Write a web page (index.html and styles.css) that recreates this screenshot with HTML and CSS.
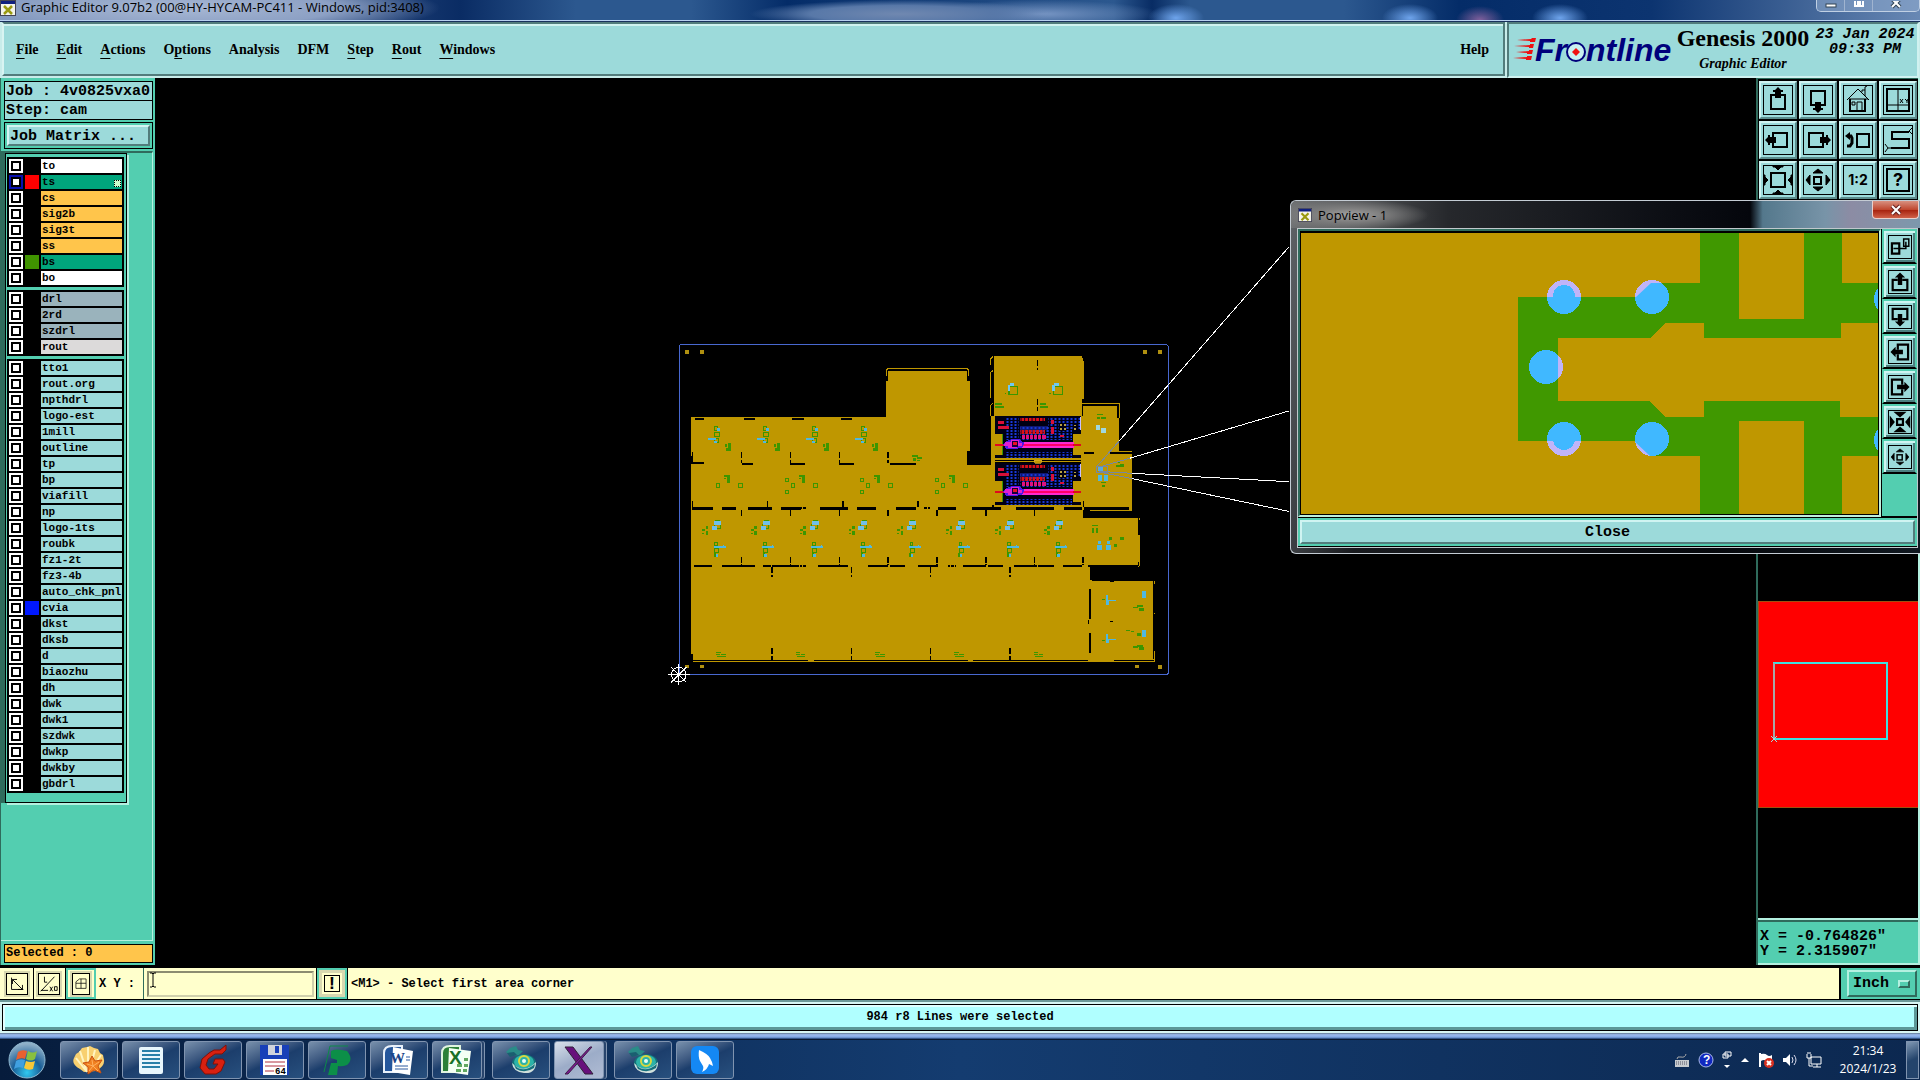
FILE: index.html
```html
<!DOCTYPE html>
<html lang="en">
<head>
    <meta charset="UTF-8">
    <meta name="viewport" content="width=device-width, initial-scale=1.0">
    <title>Graphic Editor 9.07b2</title>
    <link rel="stylesheet" href="styles.css">
</head>
<body>
    <!-- shared icon shapes -->
    <svg class="defs" width="0" height="0">
        <symbol id="xwin" viewBox="0 0 16 16">
            <rect x="0.500" y="0.500" width="15" height="15" fill="#f4f4ea" stroke="#445"/>
            <rect x="1" y="1" width="14" height="3" fill="#102080"/>
            <path d="M4 6l8 8M12 6l-8 8" stroke="#9a9a10" stroke-width="2.500"/>
        </symbol>
        <symbol id="pan" viewBox="0 0 30 30">
            <rect x="8" y="10" width="14" height="14" fill="none" stroke="#000" stroke-width="2"/>
            <path d="M15 2l3 3h2v2h-2v6h-6v-6h-2v-2h2z"/>
        </symbol>
        <symbol id="zoom-in" viewBox="0 0 30 30">
            <rect x="8" y="8" width="14" height="14" fill="none" stroke="#000" stroke-width="2"/>
            <path d="M10 1h10v1h-2l-3 3-3-3h-2zM10 29h10v-1h-2l-3-3-3 3h-2zM1 10v10h1v-2l3-3-3-3v-2zM29 10v10h-1v-2l-3-3 3-3v-2z" stroke="#000"/>
        </symbol>
        <symbol id="zoom-out" viewBox="0 0 30 30">
            <rect x="11" y="12" width="7" height="7" fill="none" stroke="#000" stroke-width="2"/>
            <path d="M10 8h10l-5-4zM10 22h10l-5 4zM7 10v10l-4-5zM23 10v10l4-5z" stroke="#000"/>
        </symbol>
        <symbol id="gem" viewBox="0 0 32 32">
            <path d="M1 8l4-4 6-2 2 4 5 1-4 4-8 1z" fill="#2a8c88"/>
            <path d="M2 9l7-1 3 3-7 2z" fill="#1a5f70"/>
            <ellipse cx="19" cy="19" rx="12" ry="9" fill="#157078"/>
            <ellipse cx="19" cy="18" rx="10" ry="7" fill="#2cb3a8"/>
            <path d="M7 19q12 12 24-1q0 12-12 11q-11-1-12-10" fill="#d0e0dc"/>
            <path d="M9 21q9 9 21-1l-1 4q-9 6-18 1z" fill="#14707c"/>
            <ellipse cx="19" cy="17" rx="5" ry="5" fill="none" stroke="#d8d840" stroke-width="2"/>
            <circle cx="19" cy="17" r="2" fill="#e8fff8"/>
        </symbol>
    </svg>

    <div class="titlebar">
        <svg class="app-icon" viewBox="0 0 16 16"><use href="#xwin"/></svg>
        <span class="title">Graphic Editor 9.07b2 (00@HY-HYCAM-PC411 - Windows, pid:3408)</span>
        <div class="win-buttons">
            <button aria-label="Minimize"><svg viewBox="0 0 14 10"><rect x="2" y="3" width="10" height="3" fill="#fff" stroke="#345"/></svg></button>
            <button aria-label="Maximize"><svg viewBox="0 0 14 10"><path d="M3-1h8v6H3zM6 1h2v2H6z" fill="none" stroke="#fff" stroke-width="2"/></svg></button>
            <button class="wide" aria-label="Close"><svg viewBox="0 0 14 10"><path d="M3-2l8 8M11-2L3 6" stroke="#345" stroke-width="4"/><path d="M3-2l8 8M11-2L3 6" stroke="#fff" stroke-width="2"/></svg></button>
        </div>
    </div>

    <header>
        <nav class="menubar">
            <a href="#"><u>F</u>ile</a>
            <a href="#"><u>E</u>dit</a>
            <a href="#"><u>A</u>ctions</a>
            <a href="#">O<u>p</u>tions</a>
            <a href="#">Analysis</a>
            <a href="#">DFM</a>
            <a href="#"><u>S</u>tep</a>
            <a href="#"><u>R</u>out</a>
            <a href="#"><u>W</u>indows</a>
            <a href="#" class="help">Help</a>
        </nav>
        <div class="brand">
            <svg class="logo" viewBox="0 0 162 40" role="img" aria-label="Frontline">
                <g fill="#ee1010">
                    <path d="M4 9l14-1 1-1h4l-1 4h-5v-1z"/><path d="M1 15l16-1v-1h4l-1 4h-4v-1z"/>
                    <path d="M3 21l13-1v-1h4l-1 4h-5v-1z"/><path d="M0 27l14-1v-1h5l-1 4h-5v-1z"/>
                </g>
                <text x="22" y="30">Fr</text>
                <circle cx="63" cy="21" r="9" fill="#c8f0f0" stroke="#00007c" stroke-width="2"/>
                <path d="M63 17l4 4-4 4-4-4z" fill="#f01010"/>
                <text x="73" y="30">ntline</text>
            </svg>
            <div class="product">
                <div class="name">Genesis 2000</div>
                <div class="sub">Graphic Editor</div>
            </div>
            <div class="date">23 Jan 2024<br>09:33 PM</div>
        </div>
    </header>

    <main>
        <aside class="sidebar">
            <div class="job">
                <div>Job : 4v0825vxa0</div>
                <div>Step: cam</div>
            </div>
            <div class="matrix"><button>Job Matrix ...</button></div>
            <div class="list-area">
                <div class="list" id="layers"></div>
            </div>
            <div class="selected">Selected : 0</div>
        </aside>

        <div class="canvas">
            <svg viewBox="156 78 1600 889" shape-rendering="crispEdges">
                <defs>
                    <pattern id="dots" width="12" height="9" patternUnits="userSpaceOnUse">
                        <rect x="2" y="2" width="6" height="6" fill="#1838d8"/>
                    </pattern>
                    <pattern id="reds" width="11" height="12" patternUnits="userSpaceOnUse">
                        <rect x="1" width="8" height="12" fill="#dc1018"/>
                    </pattern>
                    <g id="module">
                        <path d="M964 258h36v125h-36z" fill="#bf9700"/>
                        <path d="M975 259h260v124h-260v-8h24v-62h-24z" fill="#000014"/>
                        <path d="M1210 313h25v62h-25z" fill="#bf9700"/>
                        <path d="M999 313v62" stroke="#3c9600" stroke-width="3"/>
                        <rect x="1008" y="262" width="40" height="38" fill="url(#dots)"/>
                        <rect x="1050" y="288" width="84" height="12" fill="#101870"/>
                        <rect x="1050" y="288" width="90" height="42" fill="url(#dots)"/>
                        <rect x="1136" y="262" width="96" height="38" fill="url(#dots)"/>
                        <rect x="1008" y="300" width="40" height="30" fill="url(#dots)"/>
                        <rect x="1136" y="300" width="72" height="30" fill="url(#dots)"/>
                        <rect x="1006" y="365" width="200" height="18" fill="url(#dots)"/>
                        <rect x="1050" y="264" width="77" height="10" fill="url(#reds)"/>
                        <rect x="1050" y="300" width="77" height="13" fill="url(#reds)"/>
                        <rect x="1058" y="316" width="70" height="12" fill="#e01080"/>
                        <path d="M1068 316v12M1080 316v12M1092 316v12M1104 316v12M1116 316v12" stroke="#000" stroke-width="4"/>
                        <path d="M985 273h18v8h-18zM985 289h32v8h-32zM1145 270h7v13h-7zM1145 290h7v22h-7zM1170 315h12v6h-12z" fill="#d81038"/>
                        <path d="M1168 280h22v22h-22zM1210 282h12v20h-12z" fill="#000014"/>
                        <path d="M1170 282h6v6h-6zM1182 282h6v6h-6zM1170 295h6v6h-6zM1182 295h6v6h-6zM1212 284h8v5h-8zM1212 295h8v5h-8z" fill="#b8a040"/>
                        <path d="M1050 336h162v17h-162z" fill="#ff28d0"/>
                        <path d="M975 341h258v6h-258z" fill="#e00820"/>
                        <path d="M1060 341h150v6h-150z" fill="#ff0068"/>
                        <path d="M999 343l10-8 16-7h26l14 12-6 12-16 4h-32z" fill="#5018e8"/>
                        <path d="M1006 336h18v-6h24v8h10v10h-16v6h-28v-6h-10z" fill="#e020d0"/>
                        <path d="M1026 332h20v18h-20z" fill="#100040"/>
                        <path d="M1031 336h11v9h-11z" fill="#e81020"/>
                        <path d="M1234 262v38" stroke="#c8c0ff" stroke-width="3"/>
                    </g>
                    <g id="partA">
                        <path d="M136 290h8v10h-8zM136 306h14v12h-14zM134 324h12v14h-12z" fill="none" stroke="#3c9600" stroke-width="3"/>
                        <path d="M142 294h9v10h-9zM116 324h22v7h-22zM132 332h10v8h-10z" fill="#50b8e0"/>
                        <path d="M167 342h6v10h-6zM175 339h8v24h-8zM168 355h6v8h-6z" fill="#3c9600"/>
                    </g>
                    <g id="partB">
                        <path d="M138 570h12v6h-12zM134 584h18v12h-18z" fill="none" stroke="#3c9600" stroke-width="3"/>
                        <path d="M134 574h12v10h-12zM146 574h8v10h-8zM127 588h16v11h-16z" fill="#70c0e8"/>
                        <path d="M98 598h8v4h-8zM108 587h8v10h-8zM108 602h8v12h-8zM98 608h6v4h-6z" fill="#3c9600"/>
                        <path d="M136 636h8v10h-8zM136 654h12v12h-12z" fill="none" stroke="#3c9600" stroke-width="3"/>
                        <path d="M134 670h6v10h-6z" fill="#3c9600"/>
                        <path d="M132 648h36v5h-36zM160 644h4v10h-4zM138 672h8v10h-8z" fill="#50b8e0"/>
                    </g>
                    <g id="partC">
                        <path d="M164 434h16v6h-16zM162 444h8v4h-8zM172 442h8v18h-8z" fill="#3c9600"/>
                        <path d="M140 461h10v11h-10zM208 461h10v11h-10z" fill="none" stroke="#3c9600" stroke-width="3"/>
                    </g>
                    <path id="note" d="M140 965h13v4h-13zM140 972h12v3h-12zM154 971h14v4h-14zM142 977h26v3h-26z" fill="#3c9600"/>
                    <g id="ring">
                        <path d="M1018 170h26v24h-26z" fill="none" stroke="#3c9600" stroke-width="4"/>
                        <path d="M1014 166h8v16h-8zM1020 158h14v10h-14z" fill="#70c8f0"/>
                        <path d="M976 220h20v5h-20zM976 228h26v5h-26zM1005 188h5v5h-5z" fill="#3c9600"/>
                    </g>
                </defs>
                <svg x="670" y="330" width="510" height="360" viewBox="0 0 1530 1080" overflow="visible">
                    <!-- panel outline -->
                    <path d="M32 44h1460l4 4v982l-4 4H32l-3-4V48z" fill="none" stroke="#4868d0" stroke-width="3"/>
                    <path d="M45 60h12v12H45zM90 60h12v12H90zM1419 60h12v12h-12zM1464 60h12v12h-12zM45 1005h12v10H45zM90 1005h12v9H90zM1396 1005h12v9h-12zM1464 1005h12v12h-12z" fill="#b09010"/>

                    <!-- copper areas -->
                    <g fill="#bf9700">
                        <path d="M64 262h584V154h8v-31h236v31h8v210h-8v41h72V262h8V78h264v16h6v113h-6v53h-260v272H64z"/>
                        <path d="M975 383h265v14H975zM1235 258h8v275h-8zM975 525h265v16H975z"/>
                        <path d="M1241 228h100v12h8v130h38v170h-146z"/>
                        <path d="M64 528h1177v36h165v6h6v126h-6v9H64z"/>
                        <path d="M64 700h1190v12h12v278H64zM1265 752h185v238h-192v-120h7z"/>
                        <path d="M64 988h1392v9H64z"/>
                    </g>
                    <g fill="none" stroke="#bf9700" stroke-width="3">
                        <path d="M650 138v-16l5-6h238l5 6v16M964 104V86l6-6M1240 104V86l-6-6M964 205v-78l6-5M964 258v-32l6-6M1233 220h116v45M1349 365h38v12M1411 564v50M1260 540h128M1240 712h164l7-6v-12M1456 754v82M1456 850v146"/>
                    </g>

                    <!-- slots -->
                    <g stroke="#000" stroke-width="6" fill="none">
                        <path d="M76 267h28M222 267h34M368 267h34M514 267h34" stroke-width="7"/>
                        <path d="M68 378v20h36M218 402h32M362 402h44M508 402h44M660 402h78M896 380v22h66" stroke-width="5"/>
                        <path d="M68 535h62M156 535h44M236 535h72M334 535h60M452 535h84M562 535h58M680 535h60M806 535h54M906 535h88M1040 535h114M1184 535h52M1242 535h135" stroke-width="8"/>
                        <path d="M72 707h56M156 707h100M280 707h24M308 707h80M446 707h90M596 707h60M660 707h46M744 707h60M880 707h70M956 707h45M1034 707h68M1106 707h48M1180 707h58" stroke-width="6"/>
                        <path d="M390 535h22M764 535h18M390 707h20M834 707h24" stroke-dasharray="8 3"/>
                        <path d="M68 995v-24M68 991h348M432 991h462M910 991h344M1334 991h120" stroke-width="5"/>
                        <path d="M1244 552h166M1262 560h150M1246 562h20" stroke-width="6"/>
                        <path d="M1260 776v92M1260 908v60M1407 570v44M1452 762v74M1452 852v112M1320 754h12" stroke-width="6"/>
                        <path d="M1260 718h150M1260 731h150M1260 744h150" stroke-width="14"/>
                        <path d="M660 120h230M1262 225h76M1345 230v34M1244 369h28M1320 369h68" stroke-width="5"/>
                        <path d="M1256 870v12M1320 874h10M1290 535h20" stroke-width="4"/>
                    </g>
                    <g stroke="#000" stroke-width="4" stroke-dasharray="18 5">
                        <path d="M216 366v34M362 366v34M510 366v34M655 366v34M68 366v34"/>
                        <path d="M294 512v22M520 512v22M745 512v22M970 512v22M1241 512v22M68 512v22"/>
                        <path d="M216 540v24M362 540v24M510 540v24M655 540v24M802 540v24M949 540v24M1094 540v24"/>
                        <path d="M216 680v24M362 680v24M510 680v24M655 680v24M802 680v24M949 680v24M1094 680v24M1240 680v24"/>
                        <path d="M307 712v30M545 712v30M783 712v30M1021 712v30M1262 712v30M307 954v36M545 954v36M783 954v36M1021 954v36"/>
                        <path d="M1104 90v30M1104 208v36"/>
                    </g>

                    <use href="#module"/>
                    <use href="#module" y="141"/>
                    <path d="M1095 390h20v9h-20z" fill="#bf9700" stroke="#e0b030" stroke-width="2"/>
                    <path d="M975 390h118M1117 390h118" stroke="#000" stroke-width="3"/>
                    <use href="#partA"/><use href="#partA" x="147"/><use href="#partA" x="294"/><use href="#partA" x="441"/>
                    <use href="#partC"/><use href="#partC" x="225"/><use href="#partC" x="450"/><use href="#partC" x="675"/>
                    <path d="M348 446h8v8h-8zM348 482h8v8h-8zM573 446h8v8h-8zM573 482h8v8h-8zM798 446h8v8h-8zM798 482h8v8h-8z" fill="none" stroke="#3c9600" stroke-width="3"/>
                    <path d="M728 376h16v4h-16zM730 384h8v10h-8zM742 382h14v4h-14zM742 389h10v4h-10z" fill="#3c9600"/>
                    <g id="rowC"></g>
                    <use href="#note"/><use href="#note" x="239"/><use href="#note" x="477"/><use href="#note" x="715"/><use href="#note" x="953"/>
                    <use href="#ring"/><use href="#ring" x="134"/>

                    <g fill="#3c9600">
                        <path d="M1281 252h18v4h-18zM1281 262h10v6h-10zM1294 262h14v6h-14zM1338 404h12v8h-12zM1352 402h12v10h-12zM1345 392h6v6h-6z"/>
                        <path d="M1266 584h18v5h-18zM1266 594h8v16h-8zM1278 594h6v16h-6zM1334 642h8v8h-8zM1294 456h14v4h-14zM1297 464h8v8h-8z"/>
                        <path d="M1390 830h14v5h-14zM1402 826h18v6h-18zM1408 834h14v10h-14zM1390 948h14v5h-14zM1402 944h18v6h-18zM1408 952h14v8h-14zM1402 908h12v9h-12zM1296 806h10v4h-10zM1296 930h10v4h-10zM1370 901h10v3h-10zM1384 904h8v3h-8z"/>
                        <path d="M1352 622h10v8h-10zM1318 622h8v8h-8z"/>
                    </g>
                    <g fill="#50b8e0">
                        <path d="M1279 284h12v16h-12zM1294 294h14v14h-14z" fill="#a0d8e0"/>
                        <path d="M1286 436h12v16h-12zM1303 436h12v16h-12zM1286 632h9v10h-9zM1283 645h14v16h-14zM1312 632h10v10h-10zM1310 645h14v16h-14z"/>
                        <path d="M1308 796h8v14h24v4h-22v10h-8zM1416 782h12v22h-12zM1308 912h8v14h24v4h-22v10h-8zM1416 900h12v22h-12z"/>
                    </g>

                    <!-- leader lines to the popup -->
                    <g fill="none" stroke="#fff" stroke-width="3">
                        <path d="M1350 332L1858-249M1380 385L1858 243M1388 430L1858 455M1388 446L1858 544"/>
                        <path d="M1282 410L1350 332M1300 408L1380 385M1288 424L1388 430M1288 426L1388 446M1281 408h34v18h-34z" stroke="#7888a0"/>
                        <path d="M1284 410h16v14h-16z" fill="#58a8e0" stroke="none"/>
                        <circle cx="28" cy="1034" r="22"/>
                        <path d="M28 1002v64M-4 1034h64M5 1011l46 46M51 1011L5 1057"/>
                    </g>
                </svg>
            </svg>
        </div>

        <aside class="right">
            <div class="tools">
                <button aria-label="Pan up"><svg viewBox="0 0 30 30"><use href="#pan"/></svg></button>
                <button aria-label="Pan down"><svg class="r180" viewBox="0 0 30 30"><use href="#pan"/></svg></button>
                <button aria-label="Home"><svg viewBox="0 0 30 30"><path d="M4 15L15 4l11 11M6 14h19M19 7V5h3v6M22 5V2l2-1" fill="none" stroke="#000"/><path d="M7 14v12h15V14" fill="none" stroke="#000" stroke-width="2"/><path d="M9 17h3v3H9zM14 26v-9h5v9" fill="none" stroke="#000"/></svg></button>
                <button aria-label="Zoom to XY"><svg viewBox="0 0 30 30"><path d="M4 4h22v22H4z" fill="none" stroke="#000" stroke-width="2"/><path d="M15 4v22M4 20h22M17 14l3 4M20 14l-3 4M22 14l2 2 1-2M24 16v2" fill="none" stroke="#000"/></svg></button>
                <button aria-label="Pan left"><svg class="r270" viewBox="0 0 30 30"><use href="#pan"/></svg></button>
                <button aria-label="Pan right"><svg class="r90" viewBox="0 0 30 30"><use href="#pan"/></svg></button>
                <button aria-label="Previous view"><svg viewBox="0 0 30 30"><path d="M14 9h12v13H14z" fill="none" stroke="#000" stroke-width="2"/><path d="M6 11h2l1 2v5l-2 3H4" fill="none" stroke="#000" stroke-width="3"/><path d="M2 11l5-4v8z"/></svg></button>
                <button aria-label="Snake"><svg viewBox="0 0 30 30"><path d="M27 8H10v7h17v9H9" transform="translate(-1 -1)" fill="none" stroke="#000" stroke-width="2"/><path d="M29 3l-3 3 3 3M2 19l3 4-3 4M5 23h3" fill="none" stroke="#000"/></svg></button>
                <button aria-label="Zoom in"><svg viewBox="0 0 30 30"><use href="#zoom-in"/></svg></button>
                <button aria-label="Zoom out"><svg viewBox="0 0 30 30"><use href="#zoom-out"/></svg></button>
                <button class="ratio"><span>1:2</span></button>
                <button class="ask"><span>?</span></button>
            </div>
            <svg class="minimap" viewBox="0 0 160 720" preserveAspectRatio="xMidYMin meet" shape-rendering="crispEdges">
                <rect x="0" y="401" width="161" height="206" fill="#f00" stroke="#a05010"/>
                <rect x="16" y="463" width="113" height="76" fill="none" stroke="#40e0e0" stroke-width="2"/>
                <path d="M16 463v76" stroke="#a8a8a8" stroke-width="2"/>
                <path d="M13 536l6 6M19 536l-6 6" stroke="#a0e0e0"/>
            </svg>
            <div class="coords">X = -0.764826"<br>Y = 2.315907"</div>
        </aside>
    </main>

    <div class="command">
        <button class="cmd-btn" aria-label="Snap"><svg viewBox="0 0 22 22"><path d="M5 4v13h13M6 6l11 11M6 11V6h5M17 12v5h-5" fill="none" stroke="#000"/></svg></button>
        <button class="cmd-btn" aria-label="Angle"><svg viewBox="0 0 22 22"><path d="M2 19L17 3M2 18h8M6 3v6h3M12 14l3 5M15 14l-3 5M17 14h3v4h-3z" fill="none" stroke="#000"/></svg></button>
        <button class="cmd-btn green" aria-label="Grid"><svg viewBox="0 0 22 22"><path d="M4 17V8l5-4h9v13zM11 4v13M4 10h14" fill="none" stroke="#000" stroke-width="1"/></svg></button>
        <label for="xy">X Y :</label>
        <div class="field">
            <input type="text" id="xy">
            <svg viewBox="0 0 8 16"><path d="M1 1h2l1 1 1-1h2M4 2v12M1 15h2l1-1 1 1h2" fill="none" stroke="#000"/></svg>
        </div>
        <button class="cmd-btn green bang">!</button>
        <div class="message">&lt;M1&gt; - Select first area corner</div>
        <div class="units">
            <select aria-label="Units"><option>Inch</option><option>mm</option></select>
            <span class="knob"></span>
        </div>
    </div>

    <div class="status"><div>984 r8 Lines were selected</div></div>
    <div class="frame-bottom"></div>

    <footer class="taskbar">
        <button class="start" aria-label="Start">
            <svg viewBox="0 0 38 38">
                <defs><radialGradient id="orb" cx="50%" cy="85%" r="80%"><stop offset="0" stop-color="#30c8f0"/><stop offset="0.500" stop-color="#1a5f98"/><stop offset="1" stop-color="#8fb0c8"/></radialGradient></defs>
                <circle cx="19" cy="19" r="18" fill="url(#orb)" stroke="#8fb8d0"/>
                <path d="M10 11q4-3 9-1l-2 8q-4-2-9 1z" fill="#e86030"/>
                <path d="M20 10q5 3 9 0l-2 8q-4 3-9 0z" fill="#88c040"/>
                <path d="M8 20q4-3 9-1l-2 8q-5-2-9 1z" fill="#40a0e0"/>
                <path d="M18 20q5 2 9 0l-2 8q-5 2-9-1z" fill="#f8c838"/>
            </svg>
        </button>
        <button aria-label="Shell"><svg viewBox="0 0 32 32"><path d="M11 28L7 25Q-2 20 1 14l2-4 3-2 3-4 5-1 3-1 4 2 4 1 2 4 3 2 1 5q1 6-8 11z" fill="#f8d070"/><path d="M14 28L3 14M14 28L7 7M15 28V3M16 28l6-22M17 28L28 11" stroke="#fff4c0" stroke-width="2"/><path d="M19 12l3 5 7-1-4 6 3 7-7-3-6 4v-7l-5-4 6-1z" fill="#f08020" stroke="#c85010"/><path d="M19 16l1 6 6-4M20 22l5 5M20 22l-4 5M20 22l-6-2" fill="none" stroke="#ffb060"/></svg></button>
        <button aria-label="Notepad"><svg viewBox="0 0 32 32"><rect x="4" y="3" width="24" height="27" rx="2" fill="#e8f6fc"/><path d="M7 7h18M7 11h18M7 15h18M7 19h18M7 23h18" stroke="#2880a8" stroke-width="2"/></svg></button>
        <button aria-label="Genesis"><svg viewBox="0 0 32 32"><path d="M29 1v5l-4 4h-7l-7 5-2 6 3 4h5l4-5h-5l2-5h8l2 3-4 9-5 3H8l-5-6 2-9 7-6 5-3h6z" fill="#d82010" stroke="#801008"/></svg></button>
        <button aria-label="Disk"><svg viewBox="0 0 32 32"><path d="M1 1h29v30H1z" fill="#1840b8"/><path d="M9 1h14v10H9z" fill="#d0d4dc"/><path d="M16 2h4v7h-4z" fill="#1840b8"/><path d="M4 15h24v16H4z" fill="#fff"/><path d="M6 18h20M6 22h20M6 27h9" stroke="#b03040"/><text class="disk" x="16" y="30">64</text></svg></button>
        <button aria-label="P"><svg viewBox="0 0 32 32"><path d="M3 28L9 2h18" fill="none" stroke="#0c8a48"/><path d="M10 7q4-3 16 0 7 8 0 14-5 2-9 1l-1 9H7l3-12h6v-3l-6-2z" fill="#0c8f48"/></svg></button>
        <button aria-label="Word"><svg viewBox="0 0 32 32"><path d="M1 28V9q0-7 8-7h10v26z" fill="#24569c" stroke="#e8f0fa" stroke-width="2"/><path d="M10 3l20 4-3 24-18-3z" fill="#fff"/><path d="M23 13h4M23 16h4M12 22h13M12 25h13" stroke="#2c5aa0"/><text class="office word" x="7" y="19">W</text></svg></button>
        <button aria-label="Excel" class="stacked"><svg viewBox="0 0 32 32"><path d="M1 28V9q0-7 8-7h10v26z" fill="#2c8038" stroke="#e0f4e0" stroke-width="2"/><path d="M8 4l22 3-3 24-20-3z" fill="#f4fff4"/><path d="M16 20h5v3h-5zM23 20h4v3h-4zM15 25h5v3h-5zM22 25h4v3h-4zM23 14h4v3h-4z" fill="#60a860"/><text class="office excel" x="8" y="20">X</text></svg></button>
        <button aria-label="Gem"><svg viewBox="0 0 32 32"><use href="#gem"/></svg></button>
        <button class="active stacked" aria-label="X server"><svg viewBox="0 0 32 32"><path d="M2 3h8l20 27h-8z" fill="#68107c" stroke="#302038"/><path d="M27 3h2L5 30H2z" fill="#7a1890" stroke="#402048"/></svg></button>
        <button aria-label="Gem"><svg viewBox="0 0 32 32"><use href="#gem"/></svg></button>
        <button aria-label="Wing"><svg viewBox="0 0 32 32"><rect x="2" y="2" width="28" height="28" rx="6" fill="#1488f4"/><path d="M10 6q9 4 11 8 2 3 3 8l-4-2q-1 5-7 8 2-4 1-6l-3-5q-2-4-1-11z" fill="#fff"/></svg></button>

        <div class="tray">
            <svg viewBox="0 0 16 16"><path d="M1 8h14v7H1z" fill="#c8ccd0"/><path d="M2 10h12M2 12h12" stroke="#556" stroke-dasharray="1 1"/><path d="M3 7q0-3 4-2t5-3" fill="none" stroke="#aaa"/></svg>
            <svg viewBox="0 0 16 16"><circle cx="8" cy="8" r="7" fill="#1028c0" stroke="#a8b8e8"/><text class="q" x="5" y="12">?</text></svg>
            <svg class="small" viewBox="0 0 10 20"><path d="M3 2h6v4H3zM1 4h5v4H1z" fill="none" stroke="#fff"/><path d="M2 15h6l-3 3z" fill="#fff"/></svg>
            <svg class="small" viewBox="0 0 10 20"><path d="M1 12h8l-4-4z" fill="#fff"/></svg>
            <svg viewBox="0 0 16 16"><path d="M2 1v14" stroke="#fff" stroke-width="2"/><path d="M3 2q4-1 6 1t5 0v7q-4 1-6-1t-5 0z" fill="#fff"/><circle cx="11" cy="11" r="5" fill="#d83020"/><path d="M9 9l4 4M13 9l-4 4" stroke="#fff" stroke-width="2"/></svg>
            <svg viewBox="0 0 16 16"><path d="M1 6h3l4-4v12l-4-4H1z" fill="#fff"/><path d="M10 5q2 3 0 6M12 3q4 5 0 10" fill="none" stroke="#dde" stroke-width="1"/></svg>
            <svg viewBox="0 0 16 16"><path d="M5 5h10v7H5zM7 15h8M11 12v3M1 2v4h4V2M3 6v8h4M2 0v2M4 0v2" fill="none" stroke="#fff" stroke-width="1"/></svg>
            <div class="clock">21:34<br>2024/1/23</div>
            <button class="desktop" aria-label="Show desktop"></button>
        </div>
    </footer>

    <section class="popup">
        <div class="popup-title">
            <svg class="app-icon" viewBox="0 0 16 16"><use href="#xwin"/></svg>
            <span>Popview - 1</span>
            <button aria-label="Close popview"><svg viewBox="0 0 14 12"><path d="M3 2l8 8M11 2l-8 8" stroke="#622" stroke-width="4"/><path d="M3 2l8 8M11 2l-8 8" stroke="#fff" stroke-width="2"/></svg></button>
        </div>
        <div class="popup-body">
            <div class="popup-main">
                <svg class="popview" viewBox="0 0 577 281" shape-rendering="crispEdges">
                    <defs>
                        <path id="track" d="M217 64h118l15-14h49V0h39v86h65V0h38v50h36v40h-37v15H403V90h-38l-16 15h-92v63h91l16 16h39v-16h136v16h38v39h-36v58h-38v-93h-65v93h-39v-58h-50l-16-15H217z"/>
                        <clipPath id="track-clip"><use href="#track"/></clipPath>
                        <g id="pads">
                            <circle cx="263" cy="64" r="17"/><circle cx="351" cy="64" r="17"/><circle cx="245" cy="134" r="17"/>
                            <circle cx="263" cy="206" r="17"/><circle cx="351" cy="206" r="17"/>
                            <circle cx="590" cy="66" r="17"/><circle cx="590" cy="207" r="17"/>
                        </g>
                    </defs>
                    <rect width="577" height="281" fill="#bf9700"/>
                    <use href="#track" fill="#409800"/>
                    <use href="#pads" fill="#c0b4f8"/>
                    <use href="#pads" fill="#40b8ff" clip-path="url(#track-clip)"/>
                    <circle cx="263" cy="63" r="11" fill="#40b8ff"/>
                    <circle cx="263" cy="206" r="11" fill="#40b8ff"/>
                </svg>
                <div class="popup-tools">
                    <button aria-label="Link view"><svg viewBox="0 0 30 30"><path d="M4 10h10v14H4z" fill="none" stroke="#000" stroke-width="3"/><path d="M20 4h7v10h-7zM6 17h17V8" fill="none" stroke="#000" stroke-width="2"/></svg></button>
                    <button aria-label="Popview up"><svg viewBox="0 0 30 30"><path d="M12 12H5v14h20V12h-7" fill="none" stroke="#000" stroke-width="3"/><path d="M15 2l7 7h-4v10h-6V9H8z"/></svg></button>
                    <button aria-label="Popview down"><svg class="r180" viewBox="0 0 30 30"><path d="M12 12H5v14h20V12h-7" fill="none" stroke="#000" stroke-width="3"/><path d="M15 2l7 7h-4v10h-6V9H8z"/></svg></button>
                    <button aria-label="Popview left"><svg class="r270" viewBox="0 0 30 30"><path d="M12 12H5v14h20V12h-7" fill="none" stroke="#000" stroke-width="3"/><path d="M15 2l7 7h-4v10h-6V9H8z"/></svg></button>
                    <button aria-label="Popview right"><svg class="r90" viewBox="0 0 30 30"><path d="M12 12H5v14h20V12h-7" fill="none" stroke="#000" stroke-width="3"/><path d="M15 2l7 7h-4v10h-6V9H8z"/></svg></button>
                    <button aria-label="Popview zoom in"><svg viewBox="0 0 30 30"><path d="M11 11h8v8h-8z" fill="none" stroke="#000" stroke-width="3"/><path d="M6 1h18l-9 8zM6 29h18l-9-8zM1 6v18l7-9zM29 6v18l-7-9z"/></svg></button>
                    <button aria-label="Popview zoom out"><svg viewBox="0 0 30 30"><use href="#zoom-out"/></svg></button>
                </div>
            </div>
            <div class="popup-close"><button>Close</button></div>
        </div>
    </section>

    <script>
        const groups = [
            [['to', 'white'], ['ts', 'green', '#ff0000', true], ['cs', 'gold'], ['sig2b', 'gold'], ['sig3t', 'gold'], ['ss', 'gold'], ['bs', 'green', '#409400'], ['bo', 'white']],
            [['drl', 'grey'], ['2rd', 'grey'], ['szdrl', 'grey'], ['rout', 'light']],
            ['tto1', 'rout.org', 'npthdrl', 'logo-est', '1mill', 'outline', 'tp', 'bp', 'viafill', 'np', 'logo-1ts', 'roubk', 'fz1-2t', 'fz3-4b', 'auto_chk_pnl',
             'cvia', 'dkst', 'dksb', 'd', 'biaozhu', 'dh', 'dwk', 'dwk1', 'szdwk', 'dwkp', 'dwkby', 'gbdrl'].map(n => [n, 'aqua', n === 'cvia' ? '#0018ff' : ''])
        ];

        document.getElementById('layers').innerHTML = groups.map(group =>
            '<div class="group">' + group.map(([name, type, color, checked]) => `
                <label class="layer">
                    <input type="checkbox" ${checked ? 'checked' : ''}>
                    <span class="swatch" ${color ? `style="background:${color}"` : ''}></span>
                    <span class="layer-name ${type}">${name}</span>
                </label>`).join('') + '</div>'
        ).join('');

        // eight identical boards in the third row
        let row = '';
        for (let i = 0; i < 8; i++) {
            row += `<use href="#partB" x="${i * 146.5}"/>`;
        }
        document.getElementById('rowC').innerHTML = row;
    </script>
</body>
</html>
```
FILE: styles.css
```css
* {
    box-sizing: border-box;
}
body {
    margin: 0;
    height: 100vh;
    min-height: 900px;
    display: flex;
    flex-direction: column;
    position: relative;
    overflow: hidden;
    background: #000;
    color: #000;
    font: bold 12px "Liberation Mono", monospace;
}
button, input, select {
    font: inherit;
    color: inherit;
    margin: 0;
    padding: 0;
    border: 0;
    border-radius: 0;
}
svg {
    display: block;
}
.defs {
    position: absolute;
}
.r90 { transform: rotate(90deg); }
.r180 { transform: rotate(180deg); }
.r270 { transform: rotate(270deg); }

/* window title */
.titlebar {
    flex: none;
    height: 22px;
    display: flex;
    align-items: flex-start;
    border-bottom: 1px solid #18305c;
    box-shadow: inset 0 -1px #b8d0f0;
    background:
        radial-gradient(ellipse 260px 30px at 180px 8px, #a8b8d4, #8ca0c4 60%, transparent),
        radial-gradient(ellipse 150px 14px at 900px 14px, #7088b0, #5878a8 60%, transparent),
        radial-gradient(ellipse 120px 14px at 1040px 14px, #7896c4, transparent),
        radial-gradient(ellipse 28px 14px at 1176px 18px, #6ea4ec, transparent),
        radial-gradient(ellipse 28px 14px at 1410px 18px, #6ea4ec, transparent),
        radial-gradient(ellipse 24px 14px at 1480px 20px, #80609c, transparent),
        radial-gradient(ellipse 28px 14px at 1560px 18px, #6ea4ec, transparent),
        linear-gradient(90deg, #7890bc, #0a2c64 24%, #2c588f 30%, #2c588f 36%, #042c68 41%, #2c588f 58%, #082c64 60%, #2c588f 62%, #2c588f 70%, #042c68 76%, #0c3470 86%, #6888b4);
}
.app-icon {
    width: 16px;
    height: 16px;
}
.title {
    margin-left: 5px;
    font: 13px/14px "Open Sans", sans-serif;
}
.win-buttons {
    margin-left: auto;
    display: flex;
    height: 12px;
    border: 1px solid #c0d0e4;
    border-top: 0;
    border-radius: 0 0 5px 5px;
}
.win-buttons button {
    width: 28px;
    background: rgba(150, 175, 210, 0.5);
    border-right: 1px solid #a0b4d0;
}
.win-buttons .wide {
    width: 46px;
    border-right: 0;
}
.win-buttons svg {
    width: 14px;
    height: 10px;
    margin: 0 auto;
}

/* menu and brand */
header {
    flex: none;
    height: 56px;
    display: flex;
    gap: 2px;
    padding: 0 1px 0 2px;
    background: #c8ecea;
}
.menubar {
    flex: 1;
    display: flex;
    align-items: center;
    gap: 18px;
    padding: 2px 14px 0 12px;
    margin-bottom: 2px;
    background: #9cdada;
    border: 2px solid #527c7c;
    border-left-color: #d8f4f2;
    box-shadow: inset 0 2px #d0f2f0;
    font: bold 14px "Liberation Serif", serif;
}
.menubar a {
    color: #000;
    text-decoration: none;
}
.menubar u {
    text-underline-offset: 4px;
    text-decoration-skip-ink: none;
}
.menubar .help {
    margin-left: auto;
}
.brand {
    width: 412px;
    display: flex;
    background: #9cdada;
    border: 2px solid #527c7c;
    border-right-color: #d0f2f0;
    border-bottom-color: #d0f2f0;
    padding-left: 4px;
}
.logo {
    width: 162px;
    height: 40px;
    margin-top: 7px;
}
.logo text {
    font: italic bold 32px "Liberation Sans", sans-serif;
    fill: #00007c;
}
.product {
    width: 136px;
    text-align: center;
    white-space: nowrap;
}
.name {
    font: bold 24px/28px "Liberation Serif", serif;
}
.sub {
    font: italic bold 14px/24px "Liberation Serif", serif;
}
.date {
    flex: 1;
    padding: 3px 0 0 2px;
    text-align: center;
    white-space: nowrap;
    font: italic bold 15px/15px "Liberation Mono", monospace;
}

main {
    flex: 1;
    min-height: 0;
    display: flex;
}

/* layer list */
.sidebar {
    width: 155px;
    padding: 3px 2px 2px 3px;
    margin-bottom: 2px;
    display: flex;
    flex-direction: column;
    background: #53ceb0;
    border-left: 1px solid #2f6b5c;
}
.job div {
    height: 20px;
    padding-left: 1px;
    background: #9cdada;
    border: 1px solid #000;
    font: bold 15px/19px "Liberation Mono", monospace;
    white-space: nowrap;
}
.job div + div {
    height: 19px;
    border-top: 0;
}
.matrix {
    margin-top: 2px;
    height: 27px;
    padding: 2px;
    border: 1px solid #000;
}
.matrix button {
    width: 100%;
    height: 100%;
    padding: 1px 0 0 1px;
    text-align: left;
    background: #9cdada;
    border: 2px solid;
    border-color: #d4f4f2 #527c7c #527c7c #d4f4f2;
    font-size: 15px;
    line-height: 15px;
}
.list-area {
    flex: 1;
    min-height: 0;
    margin: 2px 0 3px -3px;
    padding-left: 4px;
    border-top: 2px solid #2f6b5c;
    border-right: 1px solid #b4f0e0;
    border-bottom: 1px solid #b4f0e0;
}
.list {
    width: 122px;
    height: 650px;
    padding: 3px 2px 0 1px;
    border: 1px solid #000;
    box-shadow: 2px 2px #b4f0e0, -4px 0 #2f6b5c;
}
.group {
    padding: 1px 2px;
    margin-bottom: 3px;
    background: #000;
}
.layer {
    display: flex;
    gap: 2px;
    height: 16px;
    padding: 1px 0;
}
.layer input {
    appearance: none;
    width: 14px;
    height: 14px;
    border: 2px solid #fff;
    background: #fff;
    box-shadow: inset 0 0 0 2px #000;
}
.layer input:checked {
    border-color: #0810b0;
}
.swatch {
    width: 14px;
    height: 14px;
}
.layer-name {
    flex: 1;
    min-width: 0;
    padding-left: 1px;
    font-size: 11px;
    line-height: 14px;
    overflow: hidden;
    white-space: nowrap;
}
.white { background: #fff; }
.green { background-color: #00a57c; }
.gold { background: #ffc54b; }
.grey { background: #9ab3bc; }
.light { background: #dcdada; }
.aqua { background: #9cdada; }
.layer :checked ~ .layer-name::after {
    content: "";
    float: right;
    width: 5px;
    height: 5px;
    margin: 5px 1px;
    border: 1px dotted #000;
    background: #cfc;
}
.selected {
    height: 19px;
    padding-left: 1px;
    line-height: 17px;
    background: #ffc54b;
    border: 1px solid #000;
}

.canvas {
    flex: 1;
    min-width: 0;
}
.canvas > svg {
    width: 100%;
    height: 100%;
}

/* right panel */
.right {
    width: 164px;
    margin-bottom: 2px;
    display: flex;
    flex-direction: column;
    border-left: 2px solid #2f6b5c;
    border-right: 2px solid #b4f0e0;
}
.tools {
    display: grid;
    grid-template-columns: repeat(4, 38px);
    gap: 2px;
    padding: 2px 1px;
    border-top: 1px solid #2f6b5c;
}
.tools button {
    height: 38px;
    padding: 2px;
    background: #9cdada;
    border: 2px solid;
    border-color: #d0f4f2 #5c8c8c #5c8c8c #d0f4f2;
}
.tools svg, .tools span {
    display: block;
    width: 30px;
    height: 30px;
}
.tools button svg, .tools button span {
    outline: 1px solid #000;
    outline-offset: -1px;
}
.ratio span {
    font: bold 14px/30px Inter, sans-serif;
}
.tools .ask span {
    border: 3px solid #9cdada;
    box-shadow: inset 0 0 0 2px #000;
    font: bold 18px/24px Inter, sans-serif;
}
.minimap {
    flex: 1;
    min-height: 0;
    width: 100%;
}
.coords {
    height: 45px;
    padding: 7px 2px 0;
    background: #53ceb0;
    border-top: 2px solid #2f6b5c;
    border-bottom: 2px solid #b4f0e0;
    box-shadow: 0 -2px #b4f0e0;
    font: bold 15px/15px "Liberation Mono", monospace;
    white-space: nowrap;
}

/* command line */
.command {
    flex: none;
    height: 33px;
    display: flex;
    border-top: 1px solid #000;
    border-bottom: 1px solid #000;
    padding: 0 2px;
    background: #ffffcc;
    align-items: stretch;
}
.cmd-btn {
    width: 32px;
    padding: 3px 4px 3px 2px;
    background: #ffffcc;
    border-right: 1px solid #000;
}
.cmd-btn svg {
    width: 22px;
    height: 22px;
    margin: 0 auto;
    border: 1px solid #000;
    outline: 2px solid #d8d8b0;
}
.cmd-btn.green {
    width: 30px;
    padding: 2px;
    border: 2px solid #53ceb0;
    background: #ffffcc;
}
.cmd-btn.green svg {
    width: 18px;
}
.command label {
    width: 48px;
    padding-left: 3px;
    line-height: 32px;
    border-right: 1px solid #2f6b5c;
}
.field {
    width: 173px;
    padding: 3px;
    position: relative;
}
.field input {
    width: 100%;
    height: 26px;
    padding-left: 4px;
    background: #ffffcc;
    border: 2px solid;
    border-color: #8c8c70 #d0d0ac #d0d0ac #8c8c70;
}
.field svg {
    position: absolute;
    left: 5px;
    top: 4px;
    width: 8px;
    height: 16px;
}
.cmd-btn.bang {
    outline: 1px solid #000;
    font-size: 18px;
    line-height: 18px;
    box-shadow: inset 0 0 0 3px #d8d8b0, inset 0 0 0 5px #ffffcc, inset 0 0 0 6px #000;
}
.message {
    flex: 1;
    padding-left: 4px;
    line-height: 32px;
}
.units {
    width: 81px;
    margin-right: -2px;
    padding: 2px 3px 2px 6px;
    position: relative;
    background: #53ceb0;
    border-left: 2px solid #000;
}
.units select {
    appearance: none;
    width: 100%;
    height: 27px;
    padding-left: 4px;
    background: #53ceb0;
    border: 2px solid;
    border-color: #b4f0e0 #2f6b5c #2f6b5c #b4f0e0;
    font-size: 15px;
}
.knob {
    position: absolute;
    right: 10px;
    top: 12px;
    width: 12px;
    height: 8px;
    border: 2px solid;
    border-color: #b4f0e0 #2f6b5c #2f6b5c #b4f0e0;
    pointer-events: none;
}
.status {
    flex: none;
    height: 33px;
    padding: 2px 2px 3px;
    background: #d8f6f4;
    border-top: 2px solid #6c9898;
}
.status div {
    height: 27px;
    line-height: 25px;
    text-align: center;
    background: #b0ffff;
    border: 1px solid #000;
    box-shadow: inset 2px 2px #e0ffff, inset -3px -3px #5c9898;
}
.frame-bottom {
    flex: none;
    height: 6px;
    background: linear-gradient(#607890, #9cbcf0 30%, #80a8e4 70%, #183868);
}

/* taskbar */
.taskbar {
    flex: none;
    height: 41px;
    display: flex;
    gap: 4px;
    padding: 1px 1px 1px 8px;
    background: linear-gradient(90deg, #061c3c, #143c70 50%, #0c2850);
    border-top: 1px solid #081830;
    color: #fff;
}
.taskbar > button {
    width: 58px;
    padding: 0;
    background: linear-gradient(155deg, #7890ac, #3c5880 35%, #1c3e6c 50%, #28507e);
    border: 1px solid #8094b0;
    border-radius: 3px;
}
.taskbar > button svg {
    width: 32px;
    height: 32px;
    margin: 0 auto;
}
.taskbar > .start {
    width: 38px;
    margin-right: 10px;
    background: none;
    border: 0;
}
.taskbar > .start svg {
    width: 38px;
    height: 38px;
}
.taskbar > .stacked {
    width: 50px;
    margin-right: 6px;
    box-shadow: 2px 0 #28446c, 3px 0 #8094b0;
}
.taskbar > .active {
    background: linear-gradient(155deg, #d8e0ea, #9cacc8 50%, #b0bcd4);
}
.disk {
    font: bold 9px "Liberation Mono", monospace;
}
.office {
    font: bold 15px "Liberation Serif", serif;
}
.word { fill: #1c4488; }
.excel {
    fill: #187028;
    font: bold 19px "Liberation Sans", sans-serif;
}
.tray {
    margin-left: auto;
    display: flex;
    align-items: center;
    gap: 8px;
}
.tray svg {
    width: 16px;
    height: 16px;
}
.tray .small {
    width: 10px;
    height: 20px;
}
.q {
    fill: #fff;
    font: bold 12px "Liberation Sans", sans-serif;
}
.clock {
    width: 76px;
    margin-right: -8px;
    text-align: center;
    font: 12px/18px "Open Sans", sans-serif;
}
.tray .desktop {
    width: 13px;
    height: 38px;
    background: linear-gradient(155deg, #8098b4, #24446c 50%);
    border: 1px solid #8094b0;
}

/* popview window */
.popup {
    position: absolute;
    top: 200px;
    right: 0;
    width: 630px;
    padding: 0 2px 5px 6px;
    border: 1px solid #c4ccd4;
    border-right: 0;
    border-radius: 6px 0 0 6px;
    background: linear-gradient(100deg, #606468, #181a1e 18%, #06080c 70%, #101820);
}
.popup-title {
    display: flex;
    align-items: center;
    height: 27px;
    margin: 0 -2px 0 -6px;
    padding-left: 7px;
    border-radius: 6px 0 0 0;
    background:
        radial-gradient(ellipse 80px 16px at 58px 14px, #a0a0a0, #808080 40%, transparent),
        linear-gradient(90deg, #707274, #26282c 25%, #0c0e14 60%, #04060c 73%, #54788c 75%, #7894a8 85%, #8c8ca4 89%, #7c98ac);
}
.popup-title .app-icon {
    width: 14px;
    height: 14px;
}
.popup-title span {
    margin-left: 6px;
    font: 13px/16px "Open Sans", sans-serif;
}
.popup-title button {
    align-self: flex-start;
    width: 47px;
    height: 18px;
    margin: 0 1px 0 auto;
    background: linear-gradient(#d89080, #c04830 50%, #a82410 55%, #d06048);
    border: 1px solid #e8d0cc;
    border-top: 0;
    border-radius: 0 0 4px 4px;
}
.popup-title button svg {
    width: 14px;
    height: 12px;
    margin: 0 auto;
}
.popup-body {
    border: 1px solid #c0c8cc;
    background: #53ceb0;
}
.popup-main {
    display: flex;
}
.popview {
    width: 583px;
    height: 288px;
    flex: none;
    background: #000;
    border: 2px solid;
    border-color: #2f6b5c #c0f0dc #c0f0dc #2f6b5c;
    padding: 2px 1px 1px;
}
.popup-tools {
    flex: 1;
    border-left: 1px solid #000;
    border-bottom: 1px solid #000;
}
.popup-tools button {
    width: 100%;
    height: 35px;
    padding: 3px 4px;
    background: #9cdada;
    border: 2px solid #53ceb0;
    border-bottom-color: #000;
    box-shadow: inset 2px 2px #d0f4f2, inset -2px -2px #4c8080;
}
.popup-tools svg {
    width: 22px;
    height: 22px;
    margin: 0 auto;
    outline: 1px solid #000;
}
.popup-close {
    height: 30px;
    padding: 2px;
    border-top: 1px solid #000;
    border-bottom: 1px solid #000;
}
.popup-close button {
    width: 100%;
    height: 100%;
    background: #9cdada;
    border: 2px solid;
    border-color: #d0f4f2 #527c7c #527c7c #d0f4f2;
    font-size: 15px;
    line-height: 15px;
}
```
